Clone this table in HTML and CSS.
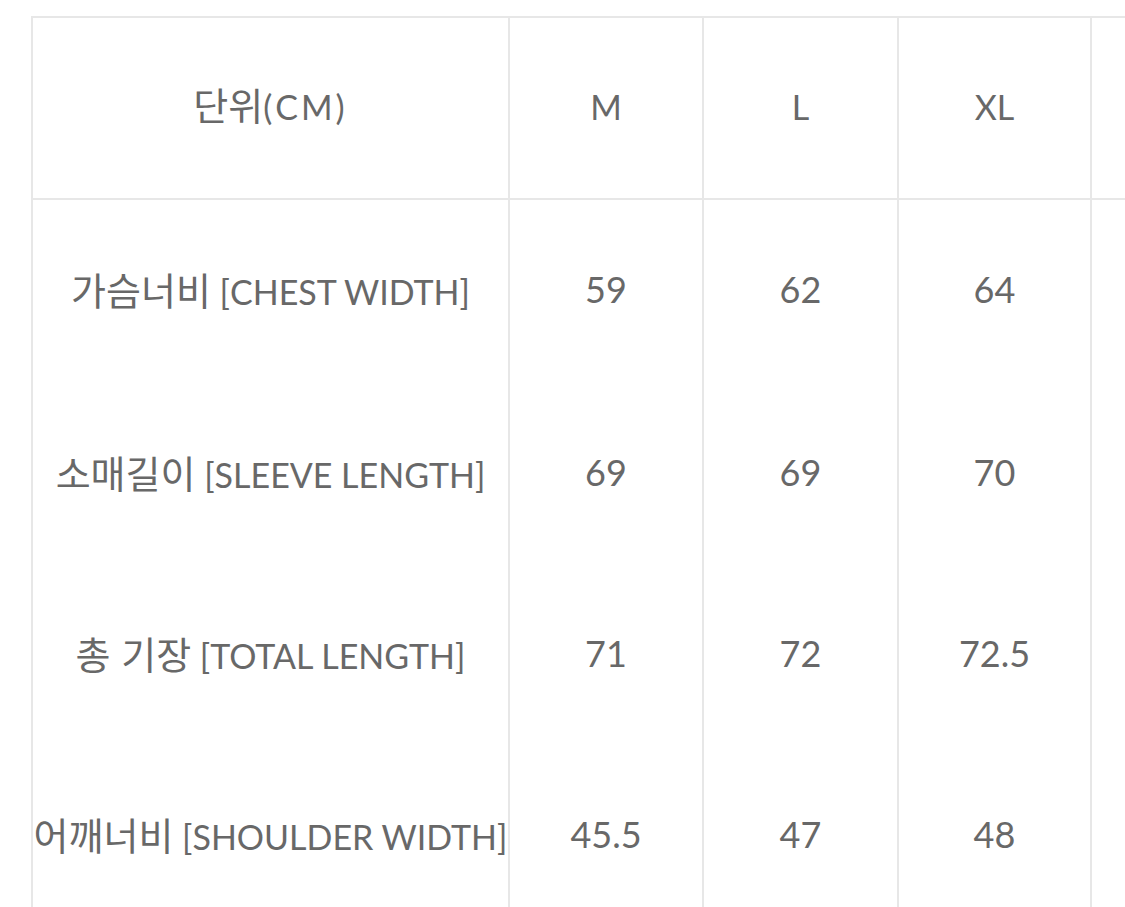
FILE: index.html
```html
<!DOCTYPE html>
<html lang="ko">
<head>
<meta charset="utf-8">
<title>Size chart</title>
<link rel="stylesheet" href="styles.css">
</head>
<body>
<div class="page">
  <table class="size-table">
    <colgroup>
      <col class="c-label">
      <col class="c-m">
      <col class="c-l">
      <col class="c-xl">
      <col class="c-next">
    </colgroup>
    <thead>
      <tr>
        <th class="unit"><span class="ko">단위</span>(CM)</th>
        <th>M</th>
        <th>L</th>
        <th>XL</th>
        <th></th>
      </tr>
    </thead>
    <tbody>
      <tr>
        <td class="label"><span class="ko">가슴너비</span> [CHEST WIDTH]</td>
        <td class="num">59</td>
        <td class="num">62</td>
        <td class="num">64</td>
        <td></td>
      </tr>
      <tr>
        <td class="label"><span class="ko">소매길이</span> [SLEEVE LENGTH]</td>
        <td class="num">69</td>
        <td class="num">69</td>
        <td class="num">70</td>
        <td></td>
      </tr>
      <tr>
        <td class="label"><span class="ko">총 기장</span> [TOTAL LENGTH]</td>
        <td class="num">71</td>
        <td class="num">72</td>
        <td class="num">72.5</td>
        <td></td>
      </tr>
      <tr>
        <td class="label"><span class="ko">어깨너비</span> [SHOULDER WIDTH]</td>
        <td class="num">45.5</td>
        <td class="num">47</td>
        <td class="num">48</td>
        <td></td>
      </tr>
    </tbody>
  </table>
</div>
</body>
</html>
```

FILE: styles.css
```css
html, body {
  margin: 0;
  padding: 0;
  background: #ffffff;
  overflow: hidden;
}

.page {
  padding: 16px 0 0 31px;
  width: 1300px;
}

.size-table {
  border-collapse: collapse;
  table-layout: fixed;
  width: 1256px;
  font-family: "Lato", "Noto Sans CJK KR", sans-serif;
  color: #686868;
  font-size: 34px;
  font-weight: 400;
}

.c-label { width: 477px; }
.c-m { width: 194px; }
.c-l { width: 195px; }
.c-xl { width: 193px; }
.c-next { width: 197px; }

.size-table th,
.size-table td {
  border: 2px solid #e7e7e7;
  padding: 0;
  text-align: center;
  vertical-align: middle;
  white-space: nowrap;
  font-weight: 400;
}

.size-table th {
  height: 176px;
  padding-bottom: 4px;
}

.size-table th.unit {
  padding-bottom: 10px;
  height: 170px;
}

.size-table tbody td {
  height: 181px;
  border-top: none;
  border-bottom: none;
}

.size-table tbody tr:first-child td {
  height: 177px;
  padding-bottom: 4px;
}

.ko {
  font-family: "Noto Sans CJK KR", sans-serif;
  font-size: 38px;
  font-weight: 400;
}

.unit {
  letter-spacing: 3px;
}

.unit .ko {
  letter-spacing: 0;
}

.num {
  font-size: 36px;
}
```
